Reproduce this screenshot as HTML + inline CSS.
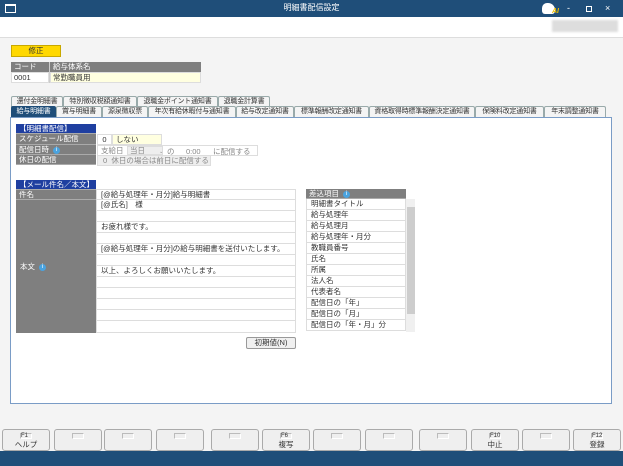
<!DOCTYPE html>
<html><head><meta charset="utf-8"><style>
*{margin:0;padding:0;box-sizing:border-box}
body{width:623px;height:466px;overflow:hidden;background:#f4f4f4;font-family:"Liberation Sans","Noto Sans CJK JP",sans-serif;font-size:7.5px;color:#333;position:relative}
.a{position:absolute;white-space:nowrap;line-height:1}
.tab{position:absolute;height:11px;border:1px solid #9aa;border-bottom:none;background:#f4f4f4;font-size:7px;line-height:10px;text-align:center;color:#333;border-radius:2px 2px 0 0;white-space:nowrap;overflow:hidden;letter-spacing:-0.2px}
.lbl{position:absolute;background:#7f7f7f;color:#fff;font-size:7.5px;line-height:10px;padding-left:3px;border-bottom:1px solid #aaa}
.row{position:absolute;left:96px;width:200px;height:11px;border:1px solid #ddd;border-top:none;background:#fff;font-size:7.5px;line-height:10px;padding-left:4px}
.li{position:absolute;left:306px;width:100px;height:11px;border:1px solid #ddd;border-top:none;background:#fff;font-size:7.5px;line-height:10px;padding-left:4px}
.fb{position:absolute;top:429px;height:22px;width:48px;border:1px solid #aaa;border-radius:3px;background:#efefef;text-align:center;font-size:7.5px}
.fb i{display:block;margin:3px auto 0;width:12px;height:6px;border:1px solid #bbb;border-right-color:#fff;border-bottom-color:#fff;font-style:normal;font-size:6px;line-height:5px;text-align:left}
.info{display:inline-block;width:7px;height:7px;border-radius:50%;background:#4aa3df;color:#fff;font-size:6px;line-height:7px;text-align:center;vertical-align:middle;margin-left:4px}
</style></head><body>
<div class="a" style="left:0;top:0;width:623px;height:17px;background:#1f4e79"></div>
<div class="a" style="left:5px;top:4px;width:11px;height:9px;border:1px solid #fff;border-top-width:2px"></div>
<div class="a" style="left:0;top:4px;width:623px;text-align:center;color:#fff;font-size:8px">明細書配信設定</div>
<div class="a" style="left:542px;top:3px;width:13px;height:11px;background:#fff;border-radius:5px 7px 3px 3px"></div>
<div class="a" style="left:552px;top:8px;color:#f0c000;font-size:7px;font-weight:bold;font-style:italic">AI</div>
<div class="a" style="left:567px;top:4px;color:#fff;font-size:9px">-</div>
<div class="a" style="left:586px;top:6px;width:6px;height:6px;border:1px solid #fff"></div>
<div class="a" style="left:605px;top:4px;color:#fff;font-size:9px">×</div>
<div class="a" style="left:0;top:17px;width:623px;height:21px;background:#fff;border-bottom:1px solid #ddd"></div>
<div class="a" style="left:552px;top:20px;width:66px;height:12px;background:#ddd;filter:blur(1px)"></div>

<div class="a" style="left:11px;top:45px;width:50px;height:12px;background:#ffd800;border:1px solid #c8a800;text-align:center;line-height:10px;font-size:7.5px">修正</div>
<div class="a" style="left:11px;top:62px;width:190px;height:10px;background:#7f7f7f"></div>
<div class="a" style="left:49px;top:62px;width:1px;height:21px;background:#ccc"></div>
<div class="a" style="left:14px;top:63px;color:#fff">コード</div>
<div class="a" style="left:53px;top:63px;color:#fff">給与体系名</div>
<div class="a" style="left:11px;top:72px;width:38px;height:11px;background:#fff;border:1px solid #ddd"></div>
<div class="a" style="left:50px;top:72px;width:151px;height:11px;background:#ffffe0;border:1px solid #ddd"></div>
<div class="a" style="left:14px;top:74px">0001</div>
<div class="a" style="left:53px;top:74px">常勤職員用</div>

<div class="tab" style="left:11px;top:96px;width:52px">還付金明細書</div>
<div class="tab" style="left:63px;top:96px;width:74px">特別徴収税額通知書</div>
<div class="tab" style="left:137px;top:96px;width:81px">退職金ポイント通知書</div>
<div class="tab" style="left:218px;top:96px;width:52px">退職金計算書</div>
<div class="a" style="left:10px;top:117px;width:602px;height:287px;background:#fff;border:1px solid #7a9cc6"></div>
<div class="tab" style="left:11px;top:106px;width:45px;background:#1f4e79;color:#fff;border-color:#1f4e79">給与明細書</div>
<div class="tab" style="left:56px;top:106px;width:46px">賞与明細書</div>
<div class="tab" style="left:102px;top:106px;width:46px">源泉徴収票</div>
<div class="tab" style="left:148px;top:106px;width:88px">年次有給休暇付与通知書</div>
<div class="tab" style="left:236px;top:106px;width:58px">給与改定通知書</div>
<div class="tab" style="left:294px;top:106px;width:75px">標準報酬改定通知書</div>
<div class="tab" style="left:369px;top:106px;width:106px">資格取得時標準報酬決定通知書</div>
<div class="tab" style="left:475px;top:106px;width:69px">保険料改定通知書</div>
<div class="tab" style="left:544px;top:106px;width:62px">年末調整通知書</div>

<div class="lbl" style="left:16px;top:124px;width:80px;height:10px;background:#1f3fa0">【明細書配信】</div>
<div class="lbl" style="left:16px;top:134px;width:80px;height:11px">スケジュール配信</div>
<div class="lbl" style="left:16px;top:145px;width:80px;height:10px">配信日時<span class="info">i</span></div>
<div class="lbl" style="left:16px;top:155px;width:80px;height:10px">休日の配信</div>
<div class="a" style="left:97px;top:134px;width:15px;height:11px;border:1px solid #ddd;background:#fff;text-align:center;line-height:10px">0</div>
<div class="a" style="left:112px;top:134px;width:50px;height:11px;border:1px solid #ddd;background:#ffffe0;line-height:10px;padding-left:3px">しない</div>
<div class="a" style="left:97px;top:145px;width:161px;height:11px;border:1px solid #ddd;background:#fff;line-height:10px;color:#888;padding-left:3px">支給日</div>
<div class="a" style="left:127px;top:146px;width:36px;height:9px;background:#eee;border:1px solid #ddd;line-height:8px;color:#888;padding-left:2px">当日 <span style="margin-left:12px;font-size:5px">⌄</span></div>
<div class="a" style="left:167px;top:148px;color:#888">の</div>
<div class="a" style="left:186px;top:148px;color:#888">0:00</div>
<div class="a" style="left:213px;top:148px;color:#888">に配信する</div>
<div class="a" style="left:97px;top:155px;width:114px;height:11px;border:1px solid #ddd;background:#eee;line-height:10px;color:#888;padding-left:5px">0 &nbsp;休日の場合は前日に配信する</div>

<div class="lbl" style="left:16px;top:180px;width:80px;height:10px;background:#1f3fa0">【メール件名／本文】</div>
<div class="lbl" style="left:16px;top:190px;width:80px;height:10px">件名</div>
<div class="a" style="left:16px;top:200px;width:80px;height:133px;background:#7f7f7f"></div>
<div class="a" style="left:20px;top:263px;color:#fff">本文<span class="info">i</span></div>
<div class="row" style="top:189px;border-top:1px solid #ddd">[@給与処理年・月分]給与明細書</div>
<div class="row" style="top:200px">[@氏名]　様</div>
<div class="row" style="top:211px"></div>
<div class="row" style="top:222px">お疲れ様です。</div>
<div class="row" style="top:233px"></div>
<div class="row" style="top:244px">[@給与処理年・月分]の給与明細書を送付いたします。</div>
<div class="row" style="top:255px"></div>
<div class="row" style="top:266px">以上、よろしくお願いいたします。</div>
<div class="row" style="top:277px"></div>
<div class="row" style="top:288px"></div>
<div class="row" style="top:299px"></div>
<div class="row" style="top:310px"></div>
<div class="row" style="top:321px;height:12px"></div>

<div class="lbl" style="left:306px;top:189px;width:100px;height:10px">差込項目<span class="info">i</span></div>
<div class="li" style="top:199px">明細書タイトル</div>
<div class="li" style="top:210px">給与処理年</div>
<div class="li" style="top:221px">給与処理月</div>
<div class="li" style="top:232px">給与処理年・月分</div>
<div class="li" style="top:243px">教職員番号</div>
<div class="li" style="top:254px">氏名</div>
<div class="li" style="top:265px">所属</div>
<div class="li" style="top:276px">法人名</div>
<div class="li" style="top:287px">代表者名</div>
<div class="li" style="top:298px">配信日の「年」</div>
<div class="li" style="top:309px">配信日の「月」</div>
<div class="li" style="top:320px">配信日の「年・月」分</div>
<div class="a" style="left:406px;top:199px;width:9px;height:133px;background:#f0f0f0"></div>
<div class="a" style="left:407px;top:207px;width:8px;height:107px;background:#cdcdcd"></div>

<div class="a" style="left:246px;top:337px;width:50px;height:12px;border:1px solid #999;border-radius:2px;background:#f0f0f0;text-align:center;line-height:10px">初期値(N)</div>

<div class="fb" style="left:2px"><i>F1</i>ヘルプ</div>
<div class="fb" style="left:54px"><i></i></div>
<div class="fb" style="left:104px"><i></i></div>
<div class="fb" style="left:156px"><i></i></div>
<div class="fb" style="left:211px"><i></i></div>
<div class="fb" style="left:262px"><i>F6</i>複写</div>
<div class="fb" style="left:313px"><i></i></div>
<div class="fb" style="left:365px"><i></i></div>
<div class="fb" style="left:419px"><i></i></div>
<div class="fb" style="left:471px"><i>F10</i>中止</div>
<div class="fb" style="left:522px"><i></i></div>
<div class="fb" style="left:573px"><i>F12</i>登録</div>
<div class="a" style="left:0;top:451px;width:623px;height:15px;background:#1f4e79"></div>
</body></html>
